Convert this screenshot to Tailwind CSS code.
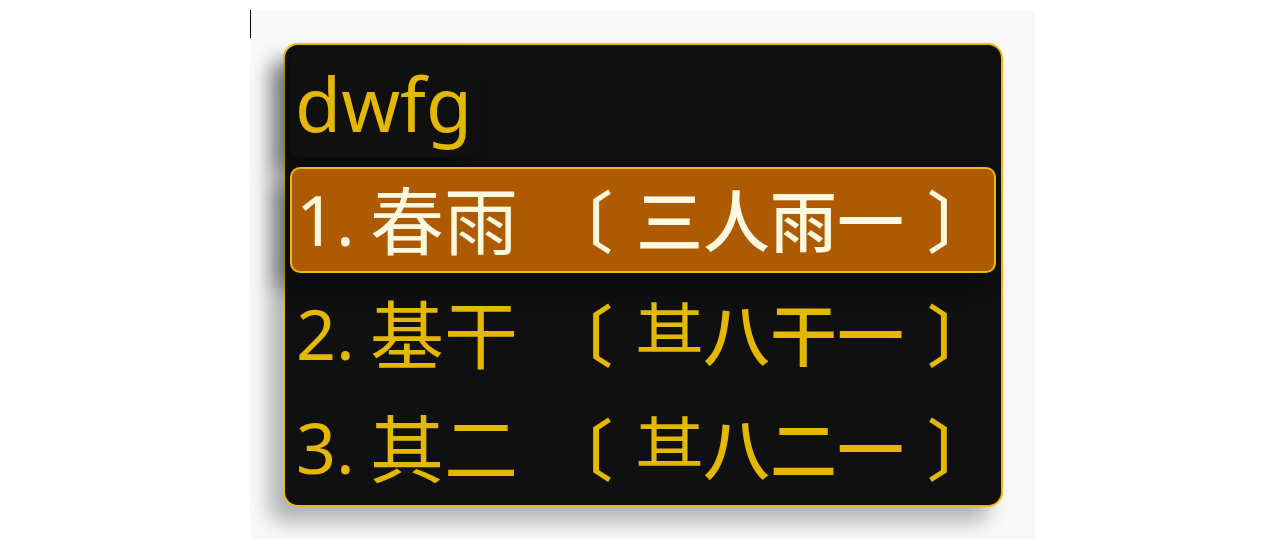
<!DOCTYPE html>
<html lang="zh-CN">
<head>
<meta charset="utf-8">
<meta name="viewport" content="width=device-width, initial-scale=1">
<title>dwfg</title>
<script src="https://cdn.jsdelivr.net/npm/@tailwindcss/browser@4"></script>
</head>
<body class="bg-white py-[10px] font-['Noto_Sans','Noto_Sans_CJK_SC',sans-serif]">
<main class="relative mx-auto max-w-[785px] bg-[#f9f9f9] pt-[33px] pr-8 pb-8 pl-[33px]">
  <!-- text caret -->
  <span class="absolute top-0 left-0 h-7 w-px bg-black"></span>
  <section class="rounded-[15px] border-2 border-[#edb80d] bg-[#101010] px-[5px] pt-[5px] pb-1 text-[#e4b700] shadow-[-14px_15px_20px_rgba(0,8,12,0.29)]">
    <div class="w-[188px] rounded-lg pl-[5px] text-[75px] leading-[107px] shadow-[-14px_15px_20px_rgba(0,5,10,0.4)]">dwfg</div>
    <ol class="mt-[10px] flex flex-col gap-2 text-[74px] leading-[102px] whitespace-nowrap">
      <li><button class="flex h-[106px] w-full items-center rounded-[10px] border-2 border-[#edb80d] bg-[#ad5a00] pt-[2px] pl-1 text-[#fff8e0] shadow-[-14px_15px_20px_rgba(0,5,10,0.4)]"><span class="w-[74px] pb-1 text-left text-[70px]">1.</span><span>春雨</span><span class="ml-[28px] flex gap-[23px] text-[67px] font-medium"><span>〔</span><span>三人雨一</span><span>〕</span></span></button></li>
      <li><button class="flex h-[106px] w-full items-center rounded-[10px] border-2 border-transparent pt-[2px] pl-1"><span class="w-[74px] pb-1 text-left text-[70px]">2.</span><span>基干</span><span class="ml-[28px] flex gap-[23px] text-[67px] font-medium"><span>〔</span><span><span class="-mx-px inline-block text-[69px] leading-none font-normal [clip-path:inset(0_0_16px_0)]">其</span>八干一</span><span>〕</span></span></button></li>
      <li><button class="flex h-[106px] w-full items-center rounded-[10px] border-2 border-transparent pt-[2px] pl-1"><span class="w-[74px] pb-1 text-left text-[70px]">3.</span><span>其二</span><span class="ml-[28px] flex gap-[23px] text-[67px] font-medium"><span>〔</span><span><span class="-mx-px inline-block text-[69px] leading-none font-normal [clip-path:inset(0_0_16px_0)]">其</span>八二一</span><span>〕</span></span></button></li>
    </ol>
  </section>
</main>
</body>
</html>
